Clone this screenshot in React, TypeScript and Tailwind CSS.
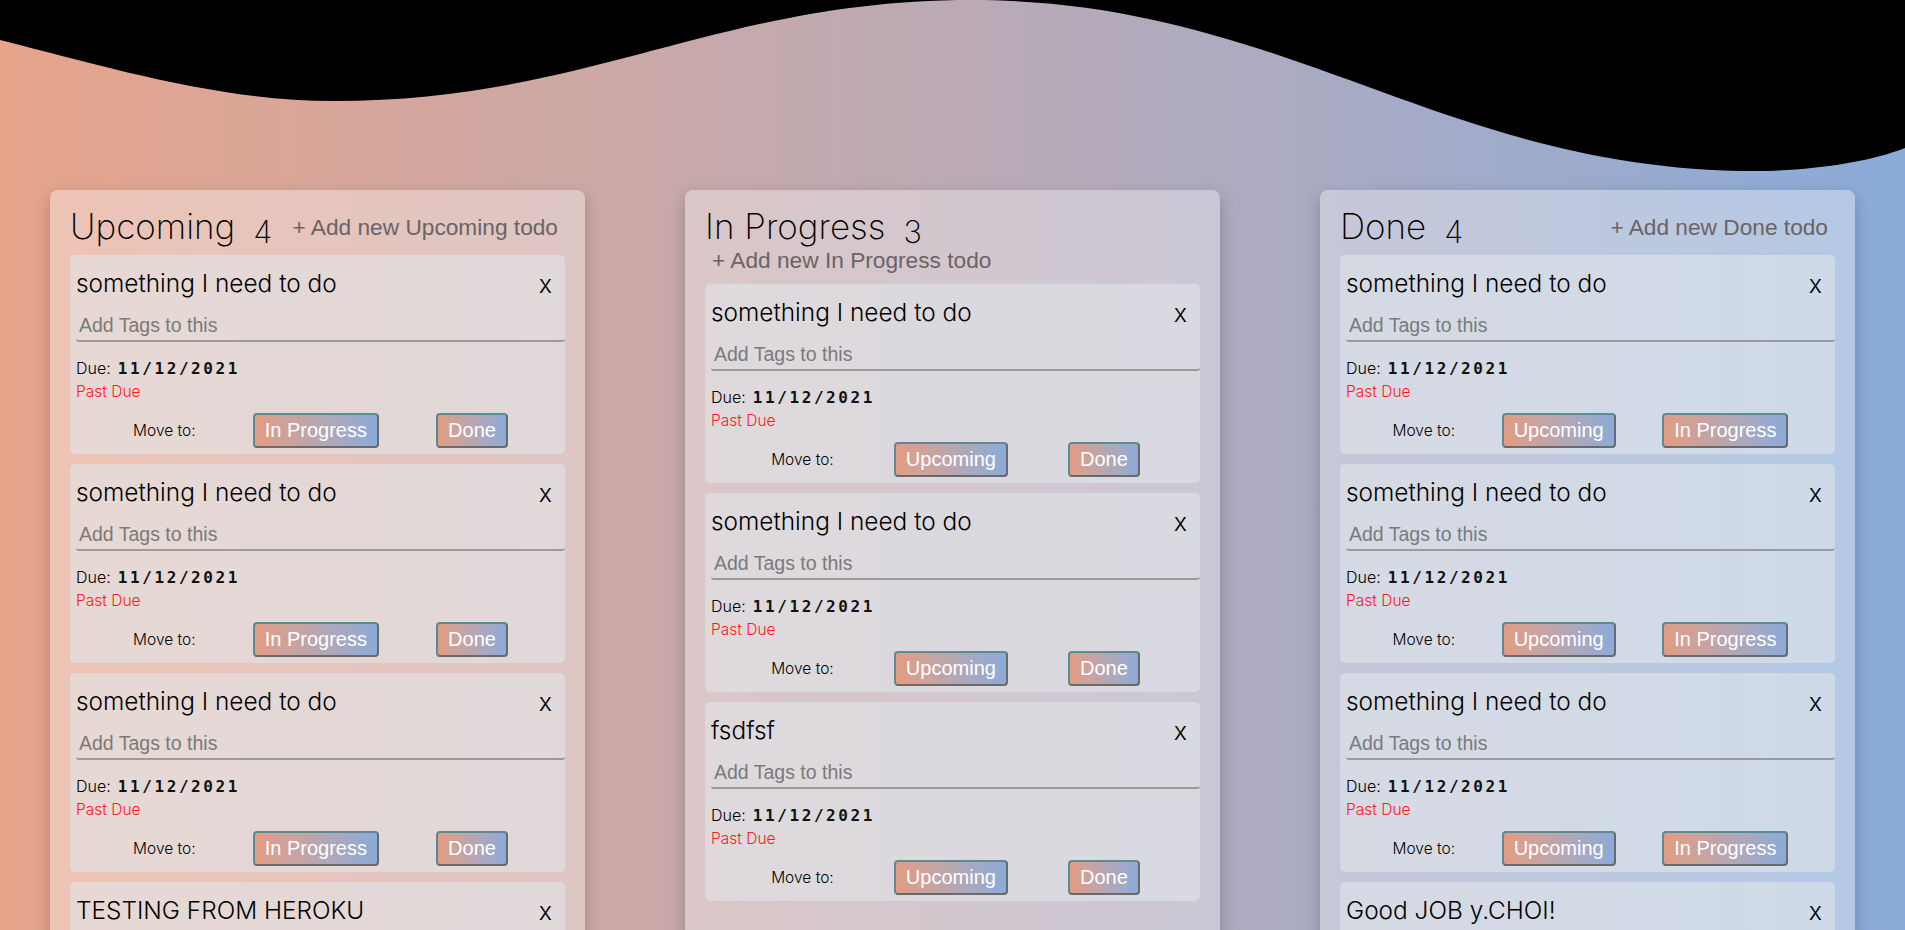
import React from "react";

type Col = { name: string; items: string[]; moves: string[] };

const cols: Col[] = [
  {
    name: "Upcoming",
    items: ["something I need to do", "something I need to do", "something I need to do", "TESTING FROM HEROKU"],
    moves: ["In Progress", "Done"],
  },
  {
    name: "In Progress",
    items: ["something I need to do", "something I need to do", "fsdfsf"],
    moves: ["Upcoming", "Done"],
  },
  {
    name: "Done",
    items: ["something I need to do", "something I need to do", "something I need to do", "Good JOB y.CHOI!"],
    moves: ["Upcoming", "In Progress"],
  },
];

function Card({ title, moves }: { title: string; moves: string[] }) {
  return (
    <div className="rounded-[5px] bg-[rgba(226,231,236,0.56)] pl-[6px] pb-[6px] pt-[10px]">
      <div className="flex items-center justify-between pr-[13px] h-[36px]">
        <span className="font-['Inter',sans-serif] font-light text-[24.4px] leading-[36px] text-black">{title}</span>
        <span className="font-['Inter',sans-serif] font-light text-[25px] leading-[36px] text-black translate-y-[1px]">x</span>
      </div>
      <input
        placeholder="Add Tags to this"
        className="mt-[8px] block h-[33px] w-full rounded-[3px] border-b-2 border-[#9b9b9b] bg-transparent pl-[3px] pt-[2px] font-['Liberation_Sans',Arial,sans-serif] text-[19.5px] text-black placeholder:text-[#7a7a7a] outline-none"
      />
      <div className="mt-[14px] flex items-baseline h-[24px]">
        <span className="font-['Inter',sans-serif] font-light text-[16px] text-black">Due:</span>
        <span className="ml-[7px] font-['DejaVu_Sans_Mono',monospace] font-bold text-[16px] tracking-[2.6px] text-[#111]">11/12/2021</span>
      </div>
      <div className="mt-[1px] font-['Inter',sans-serif] font-light text-[15.5px] leading-[22px] text-[#ff1a1a]">Past Due</div>
      <div className="mt-[10px] flex items-center justify-evenly">
        <span className="font-['Inter',sans-serif] font-light text-[15.5px] text-black">Move to:</span>
        {moves.map((m) => (
          <button
            key={m}
            className="h-[35px] rounded-[4px] border-2 border-t-[#5d8b92] border-l-[#5d8b92] border-r-[#6a6a6a] border-b-[#6a6a6a] bg-gradient-to-r from-[#e29c82] to-[#8aabd9] px-[10px] font-['Liberation_Sans',Arial,sans-serif] text-[20px] leading-[29px] text-white"
          >
            {m}
          </button>
        ))}
      </div>
    </div>
  );
}

function Panel({ col }: { col: Col }) {
  return (
    <div className="rounded-[8px] bg-white/35 px-[20px] pt-[18px] pb-[20px] shadow-[0_6px_16px_rgba(0,0,0,0.22)]">
      <div className="mb-[9px] flex flex-wrap items-center justify-between">
        <div className="flex items-baseline">
          <span className="font-['Inter',sans-serif] font-extralight text-[35px] leading-[37px] text-black">{col.name}</span>
          <span className="ml-[18px] font-['Inter',sans-serif] font-extralight text-[31px] leading-[37px] text-black translate-y-[4px]">
            {col.items.length}
          </span>
        </div>
        <button className="px-[7px] font-['Liberation_Sans',Arial,sans-serif] text-[22.7px] leading-[29px] text-[#6b6365]">
          + Add new {col.name} todo
        </button>
      </div>
      <div className="flex flex-col gap-[10px]">
        {col.items.map((t, i) => (
          <Card key={i} title={t} moves={col.moves} />
        ))}
      </div>
    </div>
  );
}

export default function App() {
  return (
    <div className="min-h-screen w-full bg-gradient-to-r from-[#e6a48b] to-[#8aabd9] pb-[40px]">
      <svg className="block h-[190px] w-full" viewBox="0 0 1905 190" preserveAspectRatio="none">
        <path
          fill="#000"
          d="M0,0 L0,40 C111,68 220,101 334,101 C590,101 717,0 972,0 C1286,0 1442,171 1756,171 C1810,171 1870,162 1905,148 L1905,0 Z"
        />
      </svg>
      <div className="grid grid-cols-3 gap-[100px] px-[50px]">
        {cols.map((c) => (
          <Panel key={c.name} col={c} />
        ))}
      </div>
    </div>
  );
}
